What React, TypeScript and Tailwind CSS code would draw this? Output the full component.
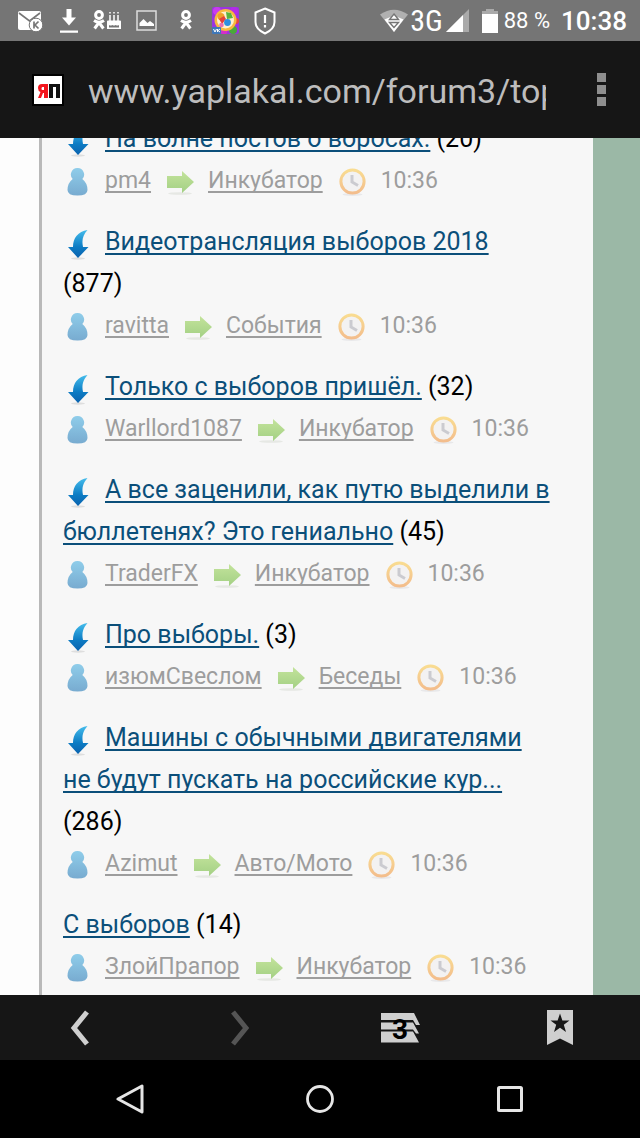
import type { ReactNode } from 'react'

type Topic = {
  title: string
  replies: number
  author: string
  forum: string
  time: string
  unread?: boolean
}

const TOPICS: Topic[] = [
  { title: 'На волне постов о воросах.', replies: 20, author: 'pm4', forum: 'Инкубатор', time: '10:36', unread: true },
  { title: 'Видеотрансляция выборов 2018', replies: 877, author: 'ravitta', forum: 'События', time: '10:36', unread: true },
  { title: 'Только с выборов пришёл.', replies: 32, author: 'Warllord1087', forum: 'Инкубатор', time: '10:36', unread: true },
  { title: 'А все заценили, как путю выделили в бюллетенях? Это гениально', replies: 45, author: 'TraderFX', forum: 'Инкубатор', time: '10:36', unread: true },
  { title: 'Про выборы.', replies: 3, author: 'изюмСвеслом', forum: 'Беседы', time: '10:36', unread: true },
  { title: 'Машины с обычными двигателями не будут пускать на российские кур...', replies: 286, author: 'Azimut', forum: 'Авто/Мото', time: '10:36', unread: true },
  { title: 'С выборов', replies: 14, author: 'ЗлойПрапор', forum: 'Инкубатор', time: '10:36' },
]

function OkGlyph() {
  return (
    <g fill="none" stroke="#fff" strokeWidth="3">
      <circle cx="6" cy="5" r="3.4" />
      <path d="M1 10.5q5 3.4 10 0M6 12.5L1.6 18.5M6 12.5l4.4 6" />
    </g>
  )
}

function StatusBar() {
  return (
    <header className="flex h-[41px] shrink-0 items-center justify-between bg-[#757575] pr-[13px] pl-[17px] text-white">
      <div className="flex items-center">
        <svg className="h-[22px] w-[26px]" viewBox="0 0 26 22">
          <rect x="1" y="1" width="23" height="19" rx="2" fill="#fff" />
          <path d="M2 3l10.500 8L23 3" fill="none" stroke="#757575" strokeWidth="1.600" />
          <circle cx="19" cy="15" r="6.800" fill="#fff" stroke="#757575" strokeWidth="1" />
          <path d="M17 11.500v7M21.500 11.500L18 15l3.500 3.500" fill="none" stroke="#757575" strokeWidth="1.700" />
        </svg>
        <svg className="ml-4 h-[26px] w-[20px]" viewBox="0 0 20 26">
          <path d="M7.500 1h5v8.500H17L10 17.500 3 9.500h4.500zM1 22.500h18v2.200H1z" fill="#fff" />
        </svg>
        <svg className="ml-[14px] h-[21px] w-[28px]" viewBox="0 0 28 21">
          <OkGlyph />
          <path d="M14 19v-7.500a1 1 0 0 1 1-1h12a1 1 0 0 1 1 1V19zM16 15v2.500h10V15q-1.500 1.200-3.300 0-1.700 1.200-3.400 0-1.700 1.200-3.300 0z" fill="#fff" fillRule="evenodd" />
          <path d="M17 5v6M21 5v6M25 5v6M17 2v1.500M21 2v1.500M25 2v1.500" stroke="#fff" strokeWidth="1.500" />
        </svg>
        <svg className="ml-[15px] h-[21px] w-[21px]" viewBox="0 0 21 21">
          <rect x="1" y="1" width="19" height="19" fill="none" stroke="#ddd" strokeWidth="1.500" />
          <path d="M3.500 16v-3l4-4 4 4 2.500-2 4 3v2z" fill="#fff" />
        </svg>
        <svg className="ml-[23px] h-[21px] w-[12px]" viewBox="0 0 12 21">
          <OkGlyph />
        </svg>
        <svg className="ml-[20px] h-[27px] w-[27px]" viewBox="0 0 27 27">
          <rect width="27" height="27" rx="2" fill="#9a35e0" />
          <circle cx="5" cy="4" r="4" fill="#c93bf0" />
          <circle cx="22" cy="4" r="4" fill="#b42be8" />
          <circle cx="24" cy="14" r="3" fill="#e8453c" />
          <circle cx="12" cy="24" r="3.500" fill="#d32fc9" />
          <circle cx="21" cy="23" r="4" fill="#4aa83a" />
          <circle cx="13.500" cy="13" r="11" fill="#f7b93e" />
          <circle cx="13.500" cy="13" r="8.500" fill="#fdf0cf" />
          <circle cx="9" cy="9.500" r="3.500" fill="#f0a02a" />
          <path d="M14 5l5 1 2 5-6 1z" fill="#58b33e" />
          <path d="M7 12l5-3 2 3-4 5z" fill="#e5413a" />
          <circle cx="15.500" cy="15.500" r="3.400" fill="#2c8fe0" />
          <circle cx="9.500" cy="18" r="2.300" fill="#e96fb0" />
          <rect y="20" width="9" height="7" rx="1" fill="#3f78b8" />
          <path d="M1.500 22l1.500 3 1.500-3M5.500 22v3M8 22l-2 1.500 2 1.500" fill="none" stroke="#fff" />
        </svg>
        <svg className="ml-[15px] h-[28px] w-[22px]" viewBox="0 0 22 28" fill="none" stroke="#fff">
          <path d="M11 1.500l9.500 4V15c0 5-4 9-9.500 11.500C5.500 24 1.500 20 1.500 15V5.500z" strokeWidth="2" />
          <path d="M11 8v8M11 18v2.500" strokeWidth="2.200" />
        </svg>
      </div>

      <div className="flex items-center">
        <svg className="h-[24px] w-[28px]" viewBox="0 0 28 24">
          <path d="M0 5.500Q14-4 28 5.500L14 23z" fill="#b0b0b0" />
          <path d="M4.500 10.500Q14 5 23.500 10.500L14 23z" fill="#fff" />
          <path d="M14 5l4.500 5.500h-9zM14 18.500l-4.500-5h9z" fill="#fff" stroke="#757575" strokeWidth="1.400" />
        </svg>
        <span className="ml-[2px] font-['Liberation_Sans_Narrow','Roboto_Condensed',Roboto,sans-serif] text-[30px] leading-none">3G</span>
        <svg className="ml-[3px] h-[23px] w-[23px]" viewBox="0 0 23 23">
          <path d="M23 0v23H0z" fill="#aaa" />
          <path d="M17 6v17H0z" fill="#fff" />
        </svg>
        <svg className="ml-[13px] h-[24px] w-[16px]" viewBox="0 0 16 24">
          <path d="M4 0h8v2h4v22H0V2h4z" fill="#aaa" />
          <path d="M0 5h16v19H0z" fill="#fff" />
        </svg>
        <span className="ml-[6px] text-[22px] leading-none">88 %</span>
        <time className="ml-[11px] text-[26px] leading-none font-medium">10:38</time>
      </div>
    </header>
  )
}

function AddressBar() {
  return (
    <div className="flex h-[97px] shrink-0 items-center bg-[#161616] pr-[34px] pl-8">
      <svg className="h-8 w-8 shrink-0" viewBox="0 0 32 32">
        <rect width="32" height="32" fill="#000" />
        <rect x="2" y="2" width="28" height="28" fill="#fff" />
        <path d="M16 10v14h-4v-5h-1l-2 5H6l2.500-6Q6 17 6 14q0-4 4-4zM12 13h-1.500Q9.500 13 9.500 14.500t1 1.500H12z" fill="#f3151d" fillRule="evenodd" />
        <path d="M17 10h11v14h-4V13h-3v11h-4z" fill="#111" />
      </svg>
      <input
        aria-label="Адрес"
        type="text"
        defaultValue="www.yaplakal.com/forum3/topic1754302.html"
        className="ml-6 min-w-0 flex-1 bg-transparent pt-1 text-[34px] text-[#bdbdbd] outline-none"
      />
      <button type="button" aria-label="Меню" className="ml-[51px] flex flex-col gap-[3px]">
        <span className="size-[9px] bg-[#8e8e8e]" />
        <span className="size-[9px] bg-[#8e8e8e]" />
        <span className="size-[9px] bg-[#8e8e8e]" />
      </button>
    </div>
  )
}

function UnreadIcon() {
  return (
    <svg className="mr-[16px] ml-[4px] inline h-[30px] w-[22px] align-[-10px]" viewBox="0 0 22 30">
      <defs>
        <linearGradient id="unread" x1="0" y1="0" x2="0" y2="1">
          <stop offset="0" stopColor="#45bdec" />
          <stop offset="0.6" stopColor="#0d7cc4" />
          <stop offset="1" stopColor="#0a62ae" />
        </linearGradient>
      </defs>
      <ellipse cx="11" cy="28.500" rx="7" ry="1.200" fill="#dedede" />
      <path d="M20.500 0C11 1.500 6 8 6 17H1l10 11 10.500-11H16C14.500 10 16 5 20.500 0z" fill="url(#unread)" />
    </svg>
  )
}

function UserIcon() {
  return (
    <svg className="mt-0.5 mr-[17px] ml-[4px] h-[28px] w-[21px]" viewBox="0 0 21 28">
      <defs>
        <linearGradient id="user" x1="0" y1="0" x2="0" y2="1">
          <stop offset="0" stopColor="#8fcdea" />
          <stop offset="1" stopColor="#78abd0" />
        </linearGradient>
      </defs>
      <path d="M10.500 0a6.500 6.500 0 0 1 4.800 11Q20.500 15 20.500 22q0 5.500-10 5.500T.5 22q0-7 5.200-11A6.500 6.500 0 0 1 10.500 0z" fill="url(#user)" />
    </svg>
  )
}

function ForumIcon() {
  return (
    <svg className="mt-1 mr-[14px] ml-[16px] h-[24px] w-[27px]" viewBox="0 0 27 24">
      <defs>
        <linearGradient id="forum" x1="0" y1="0" x2="0" y2="1">
          <stop offset="0" stopColor="#c3e39b" />
          <stop offset="1" stopColor="#a3d084" />
        </linearGradient>
      </defs>
      <ellipse cx="13" cy="22.500" rx="12" ry="1.300" fill="#e6e8e4" />
      <path d="M0 5h15V0l12 11-12 11v-5H0z" fill="url(#forum)" />
    </svg>
  )
}

function ClockIcon() {
  return (
    <svg className="mt-0.5 mr-[15px] ml-[16px] h-[28px] w-[27px]" viewBox="0 0 27 28">
      <defs>
        <linearGradient id="clock" x1="0" y1="0" x2="0" y2="1">
          <stop offset="0" stopColor="#f9dc91" />
          <stop offset="1" stopColor="#f3bd8c" />
        </linearGradient>
      </defs>
      <ellipse cx="13.500" cy="26.500" rx="10" ry="1.400" fill="#e8e8ea" />
      <circle cx="13.500" cy="13.500" r="11.600" fill="#f3f2f2" stroke="url(#clock)" strokeWidth="3" />
      <path d="M13 7v7l6 3.500" fill="none" stroke="#cbcbd0" strokeWidth="3" />
    </svg>
  )
}

function GreyLink({ children }: { children: ReactNode }) {
  return (
    <a href="#" className="underline decoration-2 underline-offset-[3px] [text-decoration-skip-ink:none]">
      {children}
    </a>
  )
}

function TopicItem({ title, replies, author, forum, time, unread }: Topic) {
  return (
    <li>
      <h2 className="text-[25px] leading-[42px] text-black">
        {unread && <UnreadIcon />}
        <a href="#" className="text-[#0b4f7a] underline decoration-2 underline-offset-[3px] [text-decoration-skip-ink:none]">
          {title}
        </a>
        {` (${replies})`}
      </h2>
      <div className="flex h-[42px] items-center text-[23px] leading-[42px] text-[#9d9d9d]">
        <UserIcon />
        <GreyLink>{author}</GreyLink>
        <ForumIcon />
        <GreyLink>{forum}</GreyLink>
        <ClockIcon />
        <time>{time}</time>
      </div>
    </li>
  )
}

function BrowserToolbar() {
  return (
    <nav className="grid h-[65px] shrink-0 grid-cols-4 place-items-center bg-[#161616]">
      <button type="button" aria-label="Назад">
        <svg className="h-9 w-5" viewBox="0 0 20 36">
          <path d="M17 2L4 18l13 16" fill="none" stroke="#cfcfcf" strokeWidth="5" />
        </svg>
      </button>
      <button type="button" aria-label="Вперёд" disabled>
        <svg className="h-9 w-5" viewBox="0 0 20 36">
          <path d="M3 2l13 16L3 34" fill="none" stroke="#555" strokeWidth="5" />
        </svg>
      </button>
      <button type="button" aria-label="Вкладки">
        <svg className="h-[30px] w-[39px]" viewBox="0 0 39 30">
          <path d="M0 0h33l6 12h-4l-3-5H0zM0 9.500h32l6 11h-3l-3-4H0zM0 18.500h32L38 29.500H0z" fill="#cfcfcf" />
          <text x="19" y="26" textAnchor="middle" fontSize="28" fontWeight="700" fontFamily="Roboto, sans-serif" fill="#000">3</text>
        </svg>
      </button>
      <button type="button" aria-label="Закладки">
        <svg className="h-[35px] w-[26px]" viewBox="0 0 26 35">
          <path d="M0 0h26v35l-13-6.500L0 35z" fill="#cfcfcf" />
          <path d="M13 3.500l2.400 7h7.100l-5.700 4.300 2.200 7.200-6-4.300-6 4.300 2.200-7.200-5.700-4.300h7.100z" fill="#161616" />
        </svg>
      </button>
    </nav>
  )
}

function SystemNav() {
  return (
    <nav className="grid h-[78px] shrink-0 grid-cols-3 place-items-center bg-black px-[35px]">
      <button type="button" aria-label="Система: назад">
        <svg className="h-8 w-7" viewBox="0 0 28 32" fill="none" stroke="#e6e6e6" strokeWidth="3" strokeLinejoin="round">
          <path d="M26 3v26L2 16z" />
        </svg>
      </button>
      <button type="button" aria-label="Домой">
        <svg className="size-7" viewBox="0 0 28 28" fill="none" stroke="#e6e6e6" strokeWidth="2.800">
          <circle cx="14" cy="14" r="12.500" />
        </svg>
      </button>
      <button type="button" aria-label="Недавние">
        <svg className="size-[26px]" viewBox="0 0 26 26" fill="none" stroke="#e6e6e6" strokeWidth="3">
          <rect x="1.500" y="1.500" width="23" height="23" rx="1" />
        </svg>
      </button>
    </nav>
  )
}

export default function App() {
  return (
    <div className="flex h-screen flex-col overflow-hidden bg-black font-[Roboto,sans-serif]">
      <StatusBar />
      <AddressBar />
      <main className="flex min-h-0 flex-1 overflow-hidden bg-[#9bb8a6]">
        <div className="w-[39px] shrink-0 bg-[#fdfdfd]" />
        <div className="mr-[47px] min-w-0 flex-1 border-l-3 border-[#b9b9b9] bg-[#f7f7f7] pr-[41px] pl-[21px]">
          <ul className="-mt-5 flex flex-col gap-[19px]">
            {TOPICS.map((topic) => (
              <TopicItem key={topic.title} {...topic} />
            ))}
          </ul>
        </div>
      </main>
      <BrowserToolbar />
      <SystemNav />
    </div>
  )
}
